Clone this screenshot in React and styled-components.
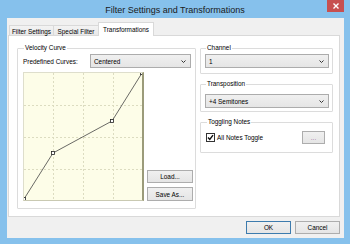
import React from 'react';
import styled, { createGlobalStyle } from 'styled-components';

const GlobalStyle = createGlobalStyle`
  html, body {
    margin: 0;
    padding: 0;
    background: #86c1ec;
  }
  body {
    font-family: "Liberation Sans", Arial, sans-serif;
    font-size: 6.4px;
    color: #000;
  }
`;

const curvePoints = [
  [1, 127],
  [30, 81],
  [89, 49],
  [119, 1],
];

const Window = styled.div`
  width: 350px;
  height: 244px;
  background: #86c1ec;
  display: flex;
  flex-direction: column;
  box-sizing: border-box;
`;

const TitleBar = styled.div`
  position: relative;
  height: 18px;
  display: flex;
  align-items: center;
  justify-content: center;
  font-family: "Liberation Sans", Arial, sans-serif;
  font-size: 9px;
  color: #1a1a1a;
  padding-top: 1px;
  box-sizing: border-box;
`;

const CloseButton = styled.div`
  position: absolute;
  top: 0;
  right: 6px;
  width: 17px;
  height: 12px;
  background: #c75050;
  display: flex;
  align-items: center;
  justify-content: center;
`;

const Client = styled.div`
  flex: 1;
  margin: 0 6px 6px 7px;
  background: #f0f0f0;
  padding: 4px 4px 0 1px;
  display: flex;
  flex-direction: column;
  box-sizing: border-box;
`;

const TabStrip = styled.div`
  display: flex;
  align-items: flex-end;
  height: 14px;
  padding-left: 1px;
  position: relative;
  z-index: 1;
  margin-bottom: -1px;
`;

const Tab = styled.div`
  width: ${(p) => p.$w}px;
  height: ${(p) => (p.$active ? 14 : 11)}px;
  box-sizing: border-box;
  border: 1px solid #d9d9d9;
  border-bottom: ${(p) => (p.$active ? 'none' : '1px solid #d9d9d9')};
  margin-left: ${(p) => (p.$first ? 0 : -1)}px;
  background: ${(p) => (p.$active ? '#fff' : 'linear-gradient(#f3f3f3, #e9e9e9)')};
  display: flex;
  align-items: center;
  justify-content: center;
  padding-top: ${(p) => (p.$active ? 0 : 1)}px;
  white-space: nowrap;
`;

const Panel = styled.div`
  height: 182px;
  box-sizing: border-box;
  background: #fff;
  border: 1px solid #d9d9d9;
  padding: 8px 6px 0 8px;
  display: flex;
  gap: 4px;
`;

const Group = styled.fieldset`
  margin: 0;
  min-width: 0;
  border: 1px solid #dcdcdc;
  border-radius: 1px;
  padding: ${(p) => p.$pad || '0 4px 4px 4px'};
  box-sizing: border-box;
  width: ${(p) => p.$w}px;
  height: ${(p) => (p.$h ? `${p.$h}px` : 'auto')};
`;

const Legend = styled.legend`
  padding: 0 1px;
  margin-left: 1px;
  line-height: 8px;
  font-size: 6.4px;
`;

const CurveRow = styled.div`
  display: flex;
  align-items: center;
  justify-content: space-between;
  margin-top: 2px;
`;

const Select = styled.div`
  width: ${(p) => p.$w}px;
  height: 14px;
  box-sizing: border-box;
  border: 1px solid #acacac;
  background: linear-gradient(#f0f0f0, #e5e5e5);
  display: flex;
  align-items: center;
  justify-content: space-between;
  padding: 0 4px 0 3px;
`;

const CurveBody = styled.div`
  display: flex;
  align-items: flex-end;
  gap: 3px;
  margin-top: 4px;
`;

const Graph = styled.div`
  width: 121px;
  height: 129px;
  box-sizing: border-box;
  background: #fdfde8;
  border-left: 1px solid #dedecc;
  border-top: 1px solid #dedecc;
  border-right: 2px solid #9b9b7a;
  border-bottom: 1px solid #c9c9b2;
  display: flex;
`;

const SideButtons = styled.div`
  display: flex;
  flex-direction: column;
  gap: 4px;
  margin-bottom: 0;
`;

const Button = styled.div`
  width: ${(p) => p.$w}px;
  height: ${(p) => p.$h || 13}px;
  box-sizing: border-box;
  border: 1px solid ${(p) => (p.$default ? '#3d7bad' : '#adadad')};
  background: linear-gradient(#f0f0f0, #e5e5e5);
  display: flex;
  align-items: center;
  justify-content: center;
  color: ${(p) => p.$muted ? '#a070a0' : '#000'};
`;

const RightColumn = styled.div`
  display: flex;
  flex-direction: column;
  gap: 6px;
`;

const CheckRow = styled.div`
  display: flex;
  align-items: center;
  justify-content: space-between;
  margin-top: 5px;
`;

const CheckLabel = styled.label`
  display: flex;
  align-items: center;
  gap: 2px;
`;

const CheckBox = styled.span`
  width: 9px;
  height: 9px;
  box-sizing: border-box;
  border: 1px solid #333;
  background: #fff;
  display: flex;
  align-items: center;
  justify-content: center;
`;

const Footer = styled.div`
  display: flex;
  justify-content: flex-end;
  gap: 4px;
  padding-right: 0;
  margin-top: 4px;
`;

const Chevron = () => (
  <svg width="5" height="3" viewBox="0 0 5 3">
    <path d="M0.5 0.5 L2.5 2.5 L4.5 0.5" fill="none" stroke="#333" strokeWidth="1" />
  </svg>
);

const CurveGraph = () => (
  <svg width="118" height="127" viewBox="0 0 118 127">
    {[29, 59, 89].map((x) => (
      <line key={`v${x}`} x1={x + 0.5} y1="0" x2={x + 0.5} y2="127" stroke="#dcdcc0" strokeDasharray="2 2" />
    ))}
    {[32, 64, 96].map((y) => (
      <line key={`h${y}`} x1="0" y1={y + 0.5} x2="118" y2={y + 0.5} stroke="#dcdcc0" strokeDasharray="2 2" />
    ))}
    <polyline
      points={curvePoints.map(([x, y]) => `${x - 1},${y - 1}`).join(' ')}
      fill="none"
      stroke="#444"
      strokeWidth="0.8"
    />
    {curvePoints.map(([x, y]) => (
      <rect key={`${x}-${y}`} x={x - 2.5} y={y - 2.5} width="3" height="3" fill="#fff" stroke="#222" strokeWidth="0.8" />
    ))}
  </svg>
);

const App = () => (
  <>
    <GlobalStyle />
    <Window>
      <TitleBar>
        Filter Settings and Transformations
        <CloseButton>
          <svg width="6" height="6" viewBox="0 0 6 6">
            <path d="M0.5 0.5 L5.5 5.5 M5.5 0.5 L0.5 5.5" stroke="#fff" strokeWidth="1.4" />
          </svg>
        </CloseButton>
      </TitleBar>
      <Client>
        <TabStrip>
          <Tab $w={45} $first>Filter Settings</Tab>
          <Tab $w={46}>Special Filter</Tab>
          <Tab $w={56} $active>Transformations</Tab>
        </TabStrip>
        <Panel>
          <Group $w={180} $h={165} $pad="0 4px 5px 5px">
            <Legend>Velocity Curve</Legend>
            <CurveRow>
              <span>Predefined Curves:</span>
              <Select $w={101}>
                <span>Centered</span>
                <Chevron />
              </Select>
            </CurveRow>
            <CurveBody>
              <Graph>
                <CurveGraph />
              </Graph>
              <SideButtons>
                <Button $w={46}>Load...</Button>
                <Button $w={46} $h={14}>Save As...</Button>
              </SideButtons>
            </CurveBody>
          </Group>
          <RightColumn>
            <Group $w={133} $h={30} $pad="2px 5px 3px 4px">
              <Legend>Channel</Legend>
              <Select $w={124}>
                <span>1</span>
                <Chevron />
              </Select>
            </Group>
            <Group $w={133} $h={32} $pad="6px 5px 3px 4px">
              <Legend>Transposition</Legend>
              <Select $w={124}>
                <span>+4 Semitones</span>
                <Chevron />
              </Select>
            </Group>
            <Group $w={133} $h={35} $pad="0 7px 4px 5px">
              <Legend>Toggling Notes</Legend>
              <CheckRow>
                <CheckLabel>
                  <CheckBox>
                    <svg width="7" height="7" viewBox="0 0 7 7">
                      <path d="M1 3.5 L2.8 5.5 L6 1.2" fill="none" stroke="#111" strokeWidth="1.4" />
                    </svg>
                  </CheckBox>
                  All Notes Toggle
                </CheckLabel>
                <Button $w={23} $muted>...</Button>
              </CheckRow>
            </Group>
          </RightColumn>
        </Panel>
        <Footer>
          <Button $w={45} $default>OK</Button>
          <Button $w={45}>Cancel</Button>
        </Footer>
      </Client>
    </Window>
  </>
);

export default App;
